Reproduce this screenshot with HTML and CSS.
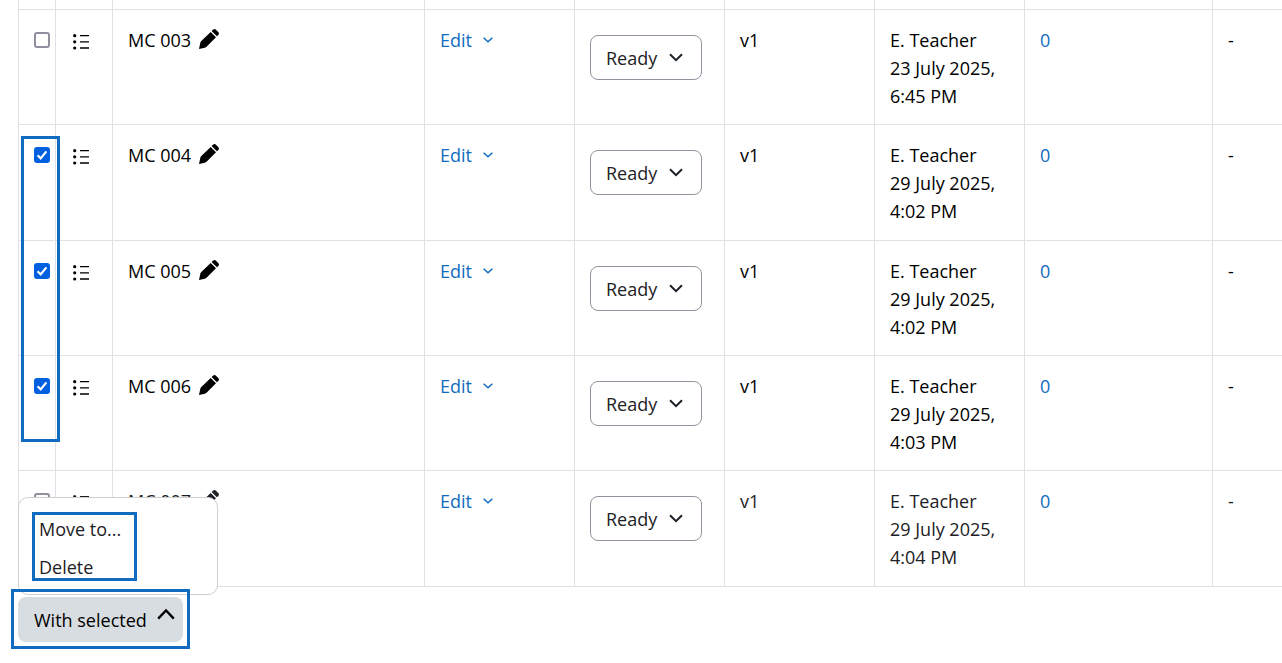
FILE: index.html
```html
<!DOCTYPE html>
<html lang="en">
<head>
<meta charset="utf-8">
<meta name="viewport" content="width=device-width, initial-scale=1">
<title>Question bank</title>
<link rel="stylesheet" href="styles.css">
</head>
<body>
<svg class="sprite" aria-hidden="true">
  <symbol id="tick" viewBox="0 0 16 16"><path d="M3.6 8.2 6.7 11.4 12.4 4.4" fill="none" stroke="#fff" stroke-width="2.2"/></symbol>
  <symbol id="list" viewBox="0 0 16 16"><circle cx="1.7" cy="1.7" r="1.6"/><circle cx="1.7" cy="7.8" r="1.6"/><circle cx="1.7" cy="14" r="1.6"/><path d="M7 1.7h9M7 7.8h9M7 14h9" stroke="currentColor" stroke-width="1.3"/></symbol>
  <symbol id="pencil" viewBox="0 0 20 20"><path d="M0 20 1.2 14.2 Q1.4 13 2.3 12.1L11.7 2.9 17 8.2 7.8 17.6 Q7 18.4 5.8 18.7Z"/><path d="M12.6 2 14 .8Q15.6-.6 17.2.9L19.2 2.9Q20.7 4.5 19.3 6L17.9 7.3Z"/></symbol>
  <symbol id="down" viewBox="0 0 14 9"><path d="M1 1.2 7 7.2 13 1.2" fill="none" stroke="currentColor" stroke-width="2"/></symbol>
  <symbol id="small-down" viewBox="0 0 10 6"><path d="M.6.8 5 4.8 9.4.8" fill="none" stroke="currentColor" stroke-width="1.5"/></symbol>
  <symbol id="up" viewBox="0 0 18 12"><path d="M1.2 10.6 9 2.4 16.8 10.6" fill="none" stroke="currentColor" stroke-width="2.4"/></symbol>
</svg>
<main class="bank">
  <table class="questions">
    <colgroup><col class="c-check"><col class="c-type"><col class="c-name"><col class="c-mid"><col class="c-mid"><col class="c-mid"><col class="c-mid"><col class="c-usage"><col></colgroup>
    <tbody>
      <tr class="cut"><td></td><td></td><td></td><td></td><td></td><td></td><td></td><td></td><td></td></tr>
      <tr>
        <td><span class="check"><input type="checkbox" aria-label="Select MC 003"><svg><use href="#tick"/></svg></span></td>
        <td class="type"><svg class="list"><use href="#list"/></svg></td>
        <td><span class="name">MC 003 <button class="rename" aria-label="Rename MC 003"><svg><use href="#pencil"/></svg></button></span></td>
        <td><a class="edit" href="#edit">Edit <svg><use href="#small-down"/></svg></a></td>
        <td class="state"><span class="pick"><select aria-label="Status of MC 003"><option>Ready</option><option>Draft</option></select><svg><use href="#down"/></svg></span></td>
        <td>v1</td><td>E. Teacher<br>23 July 2025,<br>6:45 PM</td><td><a href="#usage">0</a></td><td>-</td>
      </tr>
      <tr>
        <td><span class="check"><input type="checkbox" checked aria-label="Select MC 004"><svg><use href="#tick"/></svg></span></td>
        <td class="type"><svg class="list"><use href="#list"/></svg></td>
        <td><span class="name">MC 004 <button class="rename" aria-label="Rename MC 004"><svg><use href="#pencil"/></svg></button></span></td>
        <td><a class="edit" href="#edit">Edit <svg><use href="#small-down"/></svg></a></td>
        <td class="state"><span class="pick"><select aria-label="Status of MC 004"><option>Ready</option><option>Draft</option></select><svg><use href="#down"/></svg></span></td>
        <td>v1</td><td>E. Teacher<br>29 July 2025,<br>4:02 PM</td><td><a href="#usage">0</a></td><td>-</td>
      </tr>
      <tr>
        <td><span class="check"><input type="checkbox" checked aria-label="Select MC 005"><svg><use href="#tick"/></svg></span></td>
        <td class="type"><svg class="list"><use href="#list"/></svg></td>
        <td><span class="name">MC 005 <button class="rename" aria-label="Rename MC 005"><svg><use href="#pencil"/></svg></button></span></td>
        <td><a class="edit" href="#edit">Edit <svg><use href="#small-down"/></svg></a></td>
        <td class="state"><span class="pick"><select aria-label="Status of MC 005"><option>Ready</option><option>Draft</option></select><svg><use href="#down"/></svg></span></td>
        <td>v1</td><td>E. Teacher<br>29 July 2025,<br>4:02 PM</td><td><a href="#usage">0</a></td><td>-</td>
      </tr>
      <tr>
        <td><span class="check"><input type="checkbox" checked aria-label="Select MC 006"><svg><use href="#tick"/></svg></span></td>
        <td class="type"><svg class="list"><use href="#list"/></svg></td>
        <td><span class="name">MC 006 <button class="rename" aria-label="Rename MC 006"><svg><use href="#pencil"/></svg></button></span></td>
        <td><a class="edit" href="#edit">Edit <svg><use href="#small-down"/></svg></a></td>
        <td class="state"><span class="pick"><select aria-label="Status of MC 006"><option>Ready</option><option>Draft</option></select><svg><use href="#down"/></svg></span></td>
        <td>v1</td><td>E. Teacher<br>29 July 2025,<br>4:03 PM</td><td><a href="#usage">0</a></td><td>-</td>
      </tr>
      <tr class="last">
        <td><span class="check"><input type="checkbox" aria-label="Select MC 007"><svg><use href="#tick"/></svg></span></td>
        <td class="type"><svg class="list"><use href="#list"/></svg></td>
        <td><span class="name">MC 007 <button class="rename" aria-label="Rename MC 007"><svg><use href="#pencil"/></svg></button></span></td>
        <td><a class="edit" href="#edit">Edit <svg><use href="#small-down"/></svg></a></td>
        <td class="state"><span class="pick"><select aria-label="Status of MC 007"><option>Ready</option><option>Draft</option></select><svg><use href="#down"/></svg></span></td>
        <td>v1</td><td>E. Teacher<br>29 July 2025,<br>4:04 PM</td><td><a href="#usage">0</a></td><td>-</td>
      </tr>
    </tbody>
  </table>
  <div class="mark mark-checks"></div>
  <div class="bulk">
    <div class="menu">
      <div class="menu-items">
        <button>Move to...</button>
        <button>Delete</button>
      </div>
    </div>
    <button class="bulk-button" aria-expanded="true">With selected <svg><use href="#up"/></svg></button>
    <div class="mark mark-bulk"></div>
  </div>
</main>
</body>
</html>
```
FILE: styles.css
```css
* { box-sizing: border-box; }
body {
  margin: 0;
  background: #fff;
  color: #000;
  font: 18px/28px "Open Sans", "Noto Sans", sans-serif;
}
button, select { font: inherit; color: inherit; }
svg { display: block; fill: currentColor; overflow: visible; }
.sprite { position: absolute; width: 0; height: 0; }
a { color: #0f6cbf; text-decoration: none; }
.bank { position: relative; padding-left: 18px; overflow: hidden; }

.questions {
  width: 100%;
  table-layout: fixed;
  border-collapse: separate;
  border-spacing: 0;
  border-left: 1px solid #dee2e6;
}
.c-check { width: 37px; }
.c-type { width: 57px; }
.c-name { width: 312px; }
.c-mid { width: 150px; }
.c-usage { width: 188px; }
.questions td {
  height: 115px;
  padding: 16px 0 12px 15px;
  vertical-align: top;
  border-right: 1px solid #dee2e6;
  border-bottom: 1px solid #dee2e6;
}
.questions tr:nth-child(3n) td { height: 116px; }
.questions td:last-child { border-right: 0; }
.questions .cut td { height: 10px; padding: 0; }
.questions .last td { color: #1d2125; }

.check { display: grid; width: 16px; height: 16px; margin-top: 6px; }
.check input {
  grid-area: 1 / 1;
  appearance: none;
  width: 16px;
  height: 16px;
  margin: 0;
  border: 2px solid #8f8f9d;
  border-radius: 3px;
  background: #fff;
}
.check input:checked { border-color: #0060df; background: #0060df; }
.check svg { grid-area: 1 / 1; width: 16px; height: 16px; pointer-events: none; visibility: hidden; }
.check input:checked + svg { visibility: visible; }
.questions .type { padding-left: 17px; }
.list { width: 16px; height: 16px; margin-top: 8px; }
.name { display: flex; align-items: center; gap: 8px; }
.rename { padding: 0 0 3px; border: 0; background: none; }
.rename svg { width: 20px; height: 20px; }
.edit { display: flex; align-items: center; gap: 11px; }
.edit svg { width: 10px; height: 6px; }
.questions .state { padding-top: 25px; }
.pick { display: grid; width: 112px; align-items: center; color: #1d2125; }
.pick select {
  grid-area: 1 / 1;
  appearance: none;
  width: 100%;
  height: 45px;
  padding: 0 15px;
  border: 1px solid #8f959e;
  border-radius: 8px;
  background: #fff;
}
.pick svg { grid-area: 1 / 1; justify-self: end; width: 14px; height: 9px; margin-right: 19px; pointer-events: none; }

.mark { position: absolute; border: 3px solid #0f6cbf; pointer-events: none; }
.mark-checks { left: 21px; top: 136px; width: 39px; height: 306px; }
.bulk { position: relative; width: max-content; margin: 10px 0 20px; }
.bulk-button {
  display: flex;
  align-items: center;
  gap: 10px;
  height: 45px;
  width: 165px;
  padding: 0 0 0 16px;
  border: 0;
  border-radius: 8px;
  background: #d8dde1;
  white-space: nowrap;
}
.bulk-button svg { flex: none; width: 18px; height: 12px; margin-bottom: 12px; }
.mark-bulk { inset: -8px -7px -7px; }
.menu {
  position: absolute;
  left: 0;
  bottom: 47px;
  width: 200px;
  height: 98px;
  padding: 14px 13px;
  border: 1px solid #ced0d2;
  border-radius: 10px;
  background: #fff;
}
.menu-items {
  display: flex;
  flex-direction: column;
  gap: 10px;
  width: 105px;
  height: 69px;
  border: 3px solid #0f6cbf;
  color: #1d2125;
}
.menu-items button {
  padding: 0 4px;
  border: 0;
  background: none;
  text-align: left;
  white-space: nowrap;
}
```
